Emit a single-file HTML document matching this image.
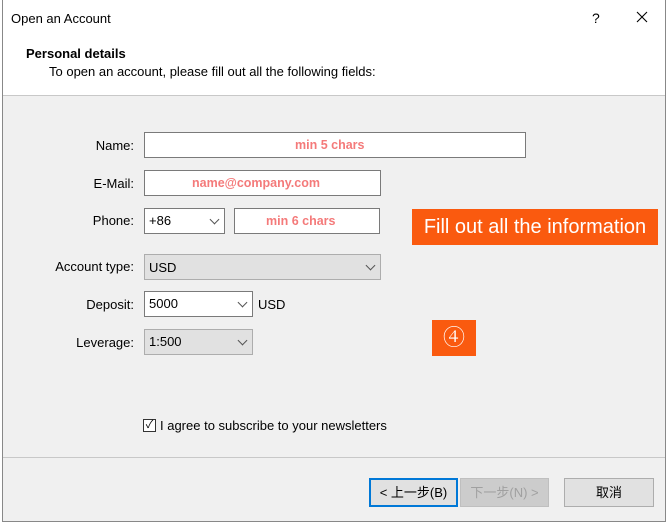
<!DOCTYPE html>
<html><head><meta charset="utf-8"><style>
*{margin:0;padding:0;box-sizing:border-box}
body{width:670px;height:526px;background:#fff;position:relative;overflow:hidden;font-family:"Liberation Sans","Noto Sans CJK SC",sans-serif;font-size:13px;color:#000}
.a{position:absolute}
.dlg{left:2px;top:0;width:664px;height:522px;border:1px solid #888;border-top:none;background:#f0f0f0}
.lbl{position:absolute;text-align:right;width:100px;font-size:13px}
.inp{position:absolute;background:#fff;border:1px solid #7a7a7a;height:26px}
.ph{color:#f47a7a;font-size:12.5px;position:absolute;top:5px;font-weight:bold}
.sel{position:absolute;border:1px solid #adadad;background:#e1e1e1;height:26px}
.chev{position:absolute;top:9px;width:7px;height:7px;border-right:1px solid #555;border-bottom:1px solid #555;transform:rotate(45deg)}
.t{position:absolute;left:4px;top:5px}
.btn{position:absolute;top:478px;height:29px;border:1px solid #adadad;background:#e1e1e1;text-align:center;line-height:27px;font-size:13px}
</style></head><body>
<div class="a dlg"></div>
<div class="a" style="left:3px;top:0;width:662px;height:96px;background:#fff;border-bottom:1px solid #c8c8c8"></div>
<div class="a" style="left:11px;top:11px;font-size:13px">Open an Account</div>
<div class="a" style="left:592px;top:10px;font-size:14px">?</div>
<svg class="a" style="left:636px;top:11px" width="12" height="12" viewBox="0 0 12 12"><path d="M1 1L11 11M11 1L1 11" stroke="#000" stroke-width="1.1"/></svg>
<div class="a" style="left:26px;top:46px;font-weight:bold;font-size:13px">Personal details</div>
<div class="a" style="left:49px;top:64px;font-size:13px">To open an account, please fill out all the following fields:</div>

<div class="lbl" style="left:34px;top:138px">Name:</div>
<div class="inp" style="left:144px;top:132px;width:382px"><span class="ph" style="left:150px">min 5 chars</span></div>
<div class="lbl" style="left:34px;top:176px">E-Mail:</div>
<div class="inp" style="left:144px;top:170px;width:237px"><span class="ph" style="left:47px">name@company.com</span></div>
<div class="lbl" style="left:34px;top:213px">Phone:</div>
<div class="inp" style="left:144px;top:208px;width:81px"><span class="t" style="top:4px">+86</span><span class="chev" style="left:66px;top:7px"></span></div>
<div class="inp" style="left:234px;top:208px;width:146px"><span class="ph" style="left:31px">min 6 chars</span></div>

<div class="lbl" style="left:34px;top:259px">Account type:</div>
<div class="sel" style="left:144px;top:254px;width:237px"><span class="t" style="top:5px">USD</span><span class="chev" style="left:222px;top:7px"></span></div>
<div class="lbl" style="left:34px;top:297px">Deposit:</div>
<div class="inp" style="left:144px;top:291px;width:109px"><span class="t" style="top:4px">5000</span><span class="chev" style="left:94px;top:7px"></span></div>
<div class="a" style="left:258px;top:297px">USD</div>
<div class="lbl" style="left:34px;top:335px">Leverage:</div>
<div class="sel" style="left:144px;top:329px;width:109px"><span class="t" style="top:4px">1:500</span><span class="chev" style="left:94px;top:7px"></span></div>

<div class="a" style="left:412px;top:209px;width:246px;height:36px;background:#fa5a0f;color:#fff;font-size:20px;line-height:36px;text-align:center">Fill out all the information</div>
<div class="a" style="left:432px;top:320px;width:44px;height:36px;background:#fa5a0f;color:#fff;font-size:22px;line-height:36px;text-align:center;font-family:'Liberation Serif','Noto Serif CJK SC',serif">④</div>

<div class="a" style="left:143px;top:419px;width:13px;height:13px;border:1px solid #333;background:#fff;font-size:11px;line-height:11px;text-align:center">✓</div>
<div class="a" style="left:160px;top:418px">I agree to subscribe to your newsletters</div>

<div class="a" style="left:3px;top:457px;width:662px;height:1px;background:#c8c8c8"></div>
<div class="btn" style="left:369px;width:89px;border:2px solid #0078d7;line-height:25px">&lt; 上一步(B)</div>
<div class="btn" style="left:460px;width:89px;color:#a0a0a0;background:#ccc;border-color:#bfbfbf">下一步(N) &gt;</div>
<div class="btn" style="left:564px;width:90px">取消</div>
</body></html>
